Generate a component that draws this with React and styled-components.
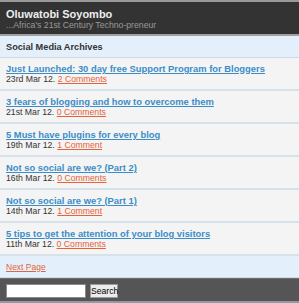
import React from "react";
import styled, { createGlobalStyle } from "styled-components";

const Global = createGlobalStyle`
  html, body { margin: 0; padding: 0; background: #555; }
  body { font-family: "Liberation Sans", Arial, sans-serif; }
`;

const Page = styled.div`
  width: 299px;
  height: 303px;
  overflow: hidden;
  display: flex;
  flex-direction: column;
  background: #f4f4f4;
`;

const Header = styled.header`
  background: #333;
  border-top: 2px solid #9a9a9a;
  border-bottom: 2px solid #a0a0a0;
  padding: 6px 6px 3px;
  display: flex;
  flex-direction: column;
`;

const Title = styled.div`
  color: #eee;
  font-weight: bold;
  font-size: 11px;
  line-height: 12px;
`;

const Tagline = styled.div`
  color: #999;
  font-size: 8.7px;
  line-height: 11px;
`;

const Section = styled.div`
  background: #e3f0fb;
  border-bottom: 1px solid #ccdae6;
  padding: 6px 6px 4px;
  font-size: ${(p) => p.$size};
  line-height: 11px;
  font-weight: ${(p) => (p.$bold ? "bold" : "normal")};
  color: #333;
`;

const List = styled.ul`
  list-style: none;
  margin: 0;
  padding: 0;
`;

const Item = styled.li`
  background: #f4f4f4;
  border-bottom: 2px solid #d6e1ea;
  padding: 6px 6px 5px;
  display: flex;
  flex-direction: column;
`;

const PostLink = styled.a`
  color: #3b8dc8;
  font-weight: bold;
  font-size: 9.4px;
  line-height: 10px;
  text-decoration: underline;
  white-space: nowrap;
`;

const Meta = styled.div`
  color: #333;
  font-size: 8.7px;
  line-height: 10px;
`;

const Orange = styled.a`
  color: #e5623b;
  text-decoration: underline;
`;

const Footer = styled.footer`
  flex: 1;
  background: #555;
  border-top: 1px solid #6e6e6e;
  border-bottom: 2px solid #8f9aa5;
  padding: 5px 6px 0;
  display: flex;
  align-items: flex-start;
  gap: 4px;
`;

const Input = styled.input`
  width: 80px;
  height: 14px;
  box-sizing: border-box;
  border: 1px solid #8a8a8a;
  background: #fff;
  margin: 0;
  padding: 0;
`;

const Button = styled.button`
  width: 28px;
  height: 14px;
  box-sizing: border-box;
  border: 1px solid #9a9a9a;
  background: #ececec;
  font-family: "Liberation Sans", Arial, sans-serif;
  font-size: 8.6px;
  color: #000;
  padding: 0;
  margin: 0;
  line-height: 12px;
  text-align: center;
`;

const posts = [
  ["Just Launched: 30 day free Support Program for Bloggers", "23rd Mar 12.", "2 Comments"],
  ["3 fears of blogging and how to overcome them", "21st Mar 12.", "0 Comments"],
  ["5 Must have plugins for every blog", "19th Mar 12.", "1 Comment"],
  ["Not so social are we? (Part 2)", "16th Mar 12.", "0 Comments"],
  ["Not so social are we? (Part 1)", "14th Mar 12.", "1 Comment"],
  ["5 tips to get the attention of your blog visitors", "11th Mar 12.", "0 Comments"],
];

export default function App() {
  return (
    <Page>
      <Global />
      <Header>
        <Title>Oluwatobi Soyombo</Title>
        <Tagline>...Africa's 21st Century Techno-preneur</Tagline>
      </Header>
      <Section $bold $size="9.2px">Social Media Archives</Section>
      <List>
        {posts.map(([t, d, c]) => (
          <Item key={t}>
            <PostLink href="#">{t}</PostLink>
            <Meta>
              {d} <Orange href="#">{c}</Orange>
            </Meta>
          </Item>
        ))}
      </List>
      <Section $size="8.5px">
        <Orange href="#">Next Page</Orange>
      </Section>
      <Footer>
        <Input type="text" />
        <Button>Search</Button>
      </Footer>
    </Page>
  );
}
